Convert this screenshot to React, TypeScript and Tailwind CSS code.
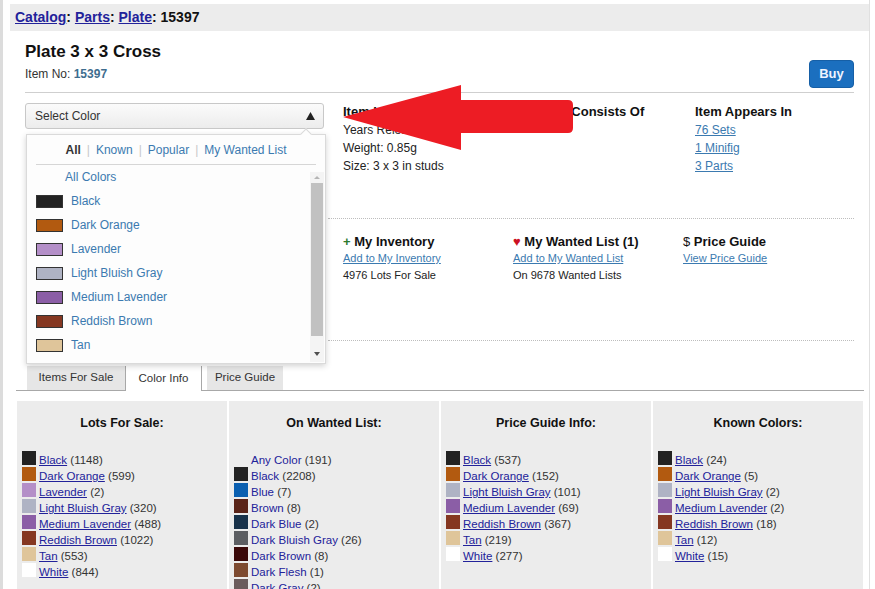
import React from "react";

type Sw = { name: string; color: string; count?: string };

const dropdownColors: Sw[] = [
  { name: "Black", color: "#222222" },
  { name: "Dark Orange", color: "#b25a10" },
  { name: "Lavender", color: "#b48fc8" },
  { name: "Light Bluish Gray", color: "#afb3c4" },
  { name: "Medium Lavender", color: "#8b5ea6" },
  { name: "Reddish Brown", color: "#853721" },
  { name: "Tan", color: "#dfc59a" },
];

const lotsForSale: Sw[] = [
  { name: "Black", color: "#222222", count: "1148" },
  { name: "Dark Orange", color: "#b25a10", count: "599" },
  { name: "Lavender", color: "#b48fc8", count: "2" },
  { name: "Light Bluish Gray", color: "#afb3c4", count: "320" },
  { name: "Medium Lavender", color: "#8b5ea6", count: "488" },
  { name: "Reddish Brown", color: "#853721", count: "1022" },
  { name: "Tan", color: "#dfc59a", count: "553" },
  { name: "White", color: "#ffffff", count: "844" },
];

const wanted: Sw[] = [
  { name: "Any Color", color: "", count: "191" },
  { name: "Black", color: "#222222", count: "2208" },
  { name: "Blue", color: "#0a5fb0", count: "7" },
  { name: "Brown", color: "#5a2418", count: "8" },
  { name: "Dark Blue", color: "#18324a", count: "2" },
  { name: "Dark Bluish Gray", color: "#5c5e62", count: "26" },
  { name: "Dark Brown", color: "#3a0808", count: "8" },
  { name: "Dark Flesh", color: "#7d4a30", count: "1" },
  { name: "Dark Gray", color: "#6b5c5c", count: "2" },
];

const priceGuide: Sw[] = [
  { name: "Black", color: "#222222", count: "537" },
  { name: "Dark Orange", color: "#b25a10", count: "152" },
  { name: "Light Bluish Gray", color: "#afb3c4", count: "101" },
  { name: "Medium Lavender", color: "#8b5ea6", count: "69" },
  { name: "Reddish Brown", color: "#853721", count: "367" },
  { name: "Tan", color: "#dfc59a", count: "219" },
  { name: "White", color: "#ffffff", count: "277" },
];

const known: Sw[] = [
  { name: "Black", color: "#222222", count: "24" },
  { name: "Dark Orange", color: "#b25a10", count: "5" },
  { name: "Light Bluish Gray", color: "#afb3c4", count: "2" },
  { name: "Medium Lavender", color: "#8b5ea6", count: "2" },
  { name: "Reddish Brown", color: "#853721", count: "18" },
  { name: "Tan", color: "#dfc59a", count: "12" },
  { name: "White", color: "#ffffff", count: "15" },
];

function Panel({ title, items, underline }: { title: string; items: Sw[]; underline: boolean }) {
  return (
    <div className="bg-[#ececec] pt-[13px] h-[200px]">
      <div className="text-[12.5px] leading-[18px] font-bold text-center text-[#111]">{title}</div>
      <div className="mt-[19px] flex flex-col">
        {items.map((it) => (
          <div key={it.name} className="h-[16px] shrink-0 flex items-start text-[11.5px] leading-[16px]">
            <div
              className="ml-[5px] w-[14px] h-[14px] shrink-0"
              style={{ backgroundColor: it.color || "transparent" }}
            />
            <div className="ml-[3px] mt-[1px] whitespace-nowrap text-[#333]">
              <span className={underline ? "underline text-[#22229a]" : "text-[#22229a]"}>{it.name}</span> ({it.count})
            </div>
          </div>
        ))}
      </div>
    </div>
  );
}

export default function App() {
  return (
    <div className="relative w-[875px] h-[589px] overflow-hidden bg-white flex items-start font-['Liberation_Sans',Arial,sans-serif] text-[#222]">
      <div className="w-[3px] h-[589px] bg-[#dcdcdc] shrink-0" />
      <div className="ml-[7px] w-[860px] min-h-[589px] border-r border-[#e0e0e0] flex flex-col shrink-0">
        {/* breadcrumb */}
        <div className="mt-[4px] h-[27px] shrink-0 bg-[#ececec] flex items-center pl-[5px] text-[14px] font-bold text-[#111]">
          <span className="underline text-[#22229a]">Catalog</span>:&nbsp;
          <span className="underline text-[#22229a]">Parts</span>:&nbsp;
          <span className="underline text-[#22229a]">Plate</span>:&nbsp;15397
        </div>

        <div className="px-[15px] shrink-0">
          {/* header */}
          <div className="pt-[10px] pb-[4px] border-b border-[#cfcfcf] flex justify-between">
            <div className="flex flex-col">
              <div className="text-[17px] leading-[22px] font-bold text-[#111]">Plate 3 x 3 Cross</div>
              <div className="mt-[3px] text-[12px] leading-[16px] text-[#333]">
                Item No: <span className="font-bold text-[#3e6d8e]">15397</span>
              </div>
            </div>
            <div className="mt-[19px] h-[28px] w-[45px] rounded-[4px] bg-[#1b6fbf] border border-[#165fa6] flex items-center justify-center text-[13px] font-bold text-[#eef4ff]">
              Buy
            </div>
          </div>

          {/* main row */}
          <div className="mt-[10px] flex">
            <div className="relative w-[303px] shrink-0">
              <div className="w-[299px] h-[26px] rounded-[3px] border border-[#c8c8c8] bg-linear-to-b from-[#fbfbfb] to-[#ececec] flex items-center justify-between pl-[9px] pr-[8px]">
                <span className="text-[12px] text-[#333]">Select Color</span>
                <svg width="9" height="8" viewBox="0 0 9 8">
                  <polygon points="4.5,0 9,8 0,8" fill="#222" />
                </svg>
              </div>

              {/* dropdown */}
              <div className="absolute left-[1px] top-[31px] w-[300px] h-[230px] bg-[#fdfdfd] border border-[#dadada] shadow-[0_2px_6px_rgba(0,0,0,0.18)] z-10">
                <div className="absolute -top-[5px] right-[15px] w-[8px] h-[8px] rotate-45 bg-[#fdfdfd] border-l border-t border-[#dadada]" />
                <div className="relative mx-[9px] h-[30px] border-b border-[#d6d6d6] flex items-center justify-center text-[12px]">
                  <span className="font-bold text-[#333]">All</span>
                  <span className="mx-[6px] text-[#c8c8c8]">|</span>
                  <span className="text-[#3b7ab0]">Known</span>
                  <span className="mx-[6px] text-[#c8c8c8]">|</span>
                  <span className="text-[#3b7ab0]">Popular</span>
                  <span className="mx-[6px] text-[#c8c8c8]">|</span>
                  <span className="text-[#3b7ab0]">My Wanted List</span>
                </div>
                <div className="h-[198px] overflow-hidden">
                  <div className="h-[24px] flex items-center pl-[38px] text-[12px] text-[#3b7ab0]">All Colors</div>
                  {dropdownColors.map((c) => (
                    <div key={c.name} className="h-[24px] flex items-center text-[12px] text-[#3b7ab0]">
                      <div className="ml-[9px] w-[27px] h-[13px] border border-[#333]" style={{ backgroundColor: c.color }} />
                      <span className="ml-[8px]">{c.name}</span>
                    </div>
                  ))}
                  <div className="h-[24px] flex items-start pt-[6px]">
                    <div className="ml-[9px] w-[27px] h-[13px] border border-[#333] bg-white" />
                  </div>
                </div>
                {/* scrollbar */}
                <div className="absolute right-[1px] top-[37px] bottom-[1px] w-[14px] bg-[#f4f4f4] flex flex-col items-center">
                  <svg width="8" height="10" viewBox="0 0 8 10" className="mt-[1px]">
                    <polygon points="4,3 7,6 1,6" fill="#b5b5b5" />
                  </svg>
                  <div className="w-[12px] h-[153px] bg-[#c1c1c1]" />
                  <div className="flex-1" />
                  <svg width="8" height="10" viewBox="0 0 8 10" className="mb-[3px]">
                    <polygon points="1,3 7,3 4,7" fill="#505050" />
                  </svg>
                </div>
              </div>
            </div>

            <div className="flex-1">
              <div className="h-[115px] pl-[15px] flex text-[12px] leading-[18px]">
                <div className="w-[198px]">
                  <div className="text-[13px] font-bold text-[#111]">Item Info</div>
                  <div>Years Released: 2015</div>
                  <div>Weight: 0.85g</div>
                  <div>Size: 3 x 3 in studs</div>
                </div>
                <div className="w-[154px]">
                  <div className="text-[13px] font-bold text-[#111]">Item Consists Of</div>
                </div>
                <div>
                  <div className="text-[13px] font-bold text-[#111]">Item Appears In</div>
                  <div className="underline text-[#3b7ab0]">76 Sets</div>
                  <div className="underline text-[#3b7ab0]">1 Minifig</div>
                  <div className="underline text-[#3b7ab0]">3 Parts</div>
                </div>
              </div>
              <div className="h-[123px] border-y border-dotted border-[#bdbdbd] pt-[14px] pl-[15px] flex text-[11px] leading-[17px]">
                <div className="w-[170px]">
                  <div className="text-[13px] font-bold text-[#111]">
                    <span className="text-[#2d7a2d]">+</span> My Inventory
                  </div>
                  <div className="underline text-[#3b7ab0]">Add to My Inventory</div>
                  <div>4976 Lots For Sale</div>
                </div>
                <div className="w-[170px]">
                  <div className="text-[13px] font-bold text-[#111]">
                    <span className="text-[#cc1122]">♥</span> My Wanted List (1)
                  </div>
                  <div className="underline text-[#3b7ab0]">Add to My Wanted List</div>
                  <div>On 9678 Wanted Lists</div>
                </div>
                <div>
                  <div className="text-[13px] font-bold text-[#111]">
                    <span className="font-normal">$</span> Price Guide
                  </div>
                  <div className="underline text-[#3b7ab0]">View Price Guide</div>
                </div>
              </div>
            </div>
          </div>
        </div>

        {/* tabs */}
        <div className="mt-[25px] ml-[6px] mr-[5px] h-[25px] shrink-0 border-b border-[#a8a8a8] flex items-end pl-[11px] text-[11.5px] text-[#333]">
          <div className="w-[98px] h-[24px] bg-[#e6e6e6] flex items-center justify-center">Items For Sale</div>
          <div className="w-[77px] h-[25px] -mb-[1px] bg-white border-x border-[#a8a8a8] flex items-center justify-center">Color Info</div>
          <div className="ml-[5px] w-[76px] h-[24px] bg-[#e6e6e6] flex items-center justify-center">Price Guide</div>
        </div>

        {/* panels */}
        <div className="mt-[10px] ml-[7px] w-[846px] shrink-0 grid grid-cols-4 gap-[2px]">
          <Panel title="Lots For Sale:" items={lotsForSale} underline />
          <Panel title="On Wanted List:" items={wanted} underline={false} />
          <Panel title="Price Guide Info:" items={priceGuide} underline />
          <Panel title="Known Colors:" items={known} underline />
        </div>
      </div>

      {/* red arrow annotation */}
      <svg className="absolute left-0 top-0 pointer-events-none z-20" width="875" height="589" viewBox="0 0 875 589">
        <path
          d="M343,117 L461,85 L461,100 L568,100 Q573,100 573,105 L573,128 Q573,133 568,133 L461,133 L461,150 Z"
          fill="#ed1c24"
        />
      </svg>
    </div>
  );
}
